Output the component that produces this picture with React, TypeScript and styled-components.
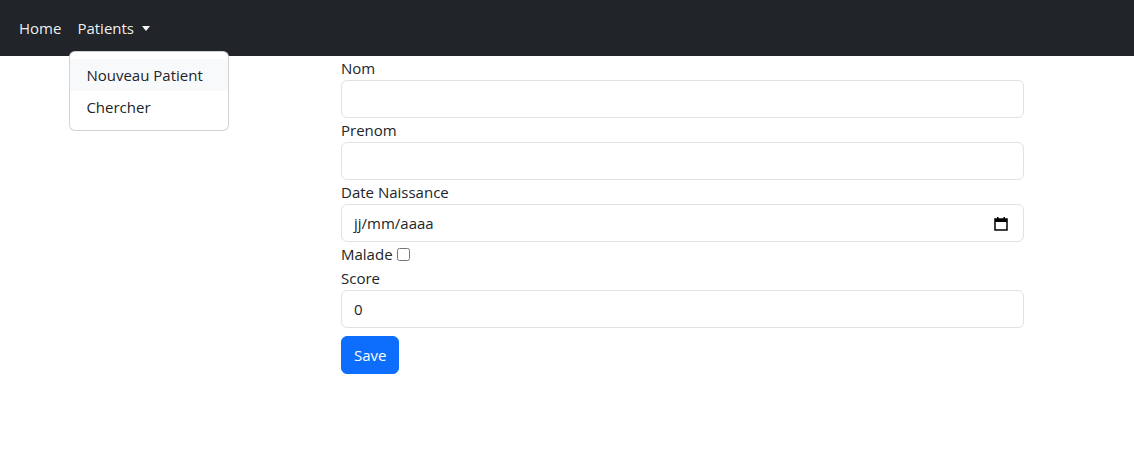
import React from "react";
import styled, {createGlobalStyle} from "styled-components";

const GlobalStyle = createGlobalStyle`
  body {
    margin: 0;
    font-family: "Open Sans", "Liberation Sans", sans-serif;
    font-size: 15px;
    line-height: 24px;
    color: #212529;
    background: #fff;
  }
  * { box-sizing: border-box; }
`

const NavBar = styled.nav`
  height: 56px;
  background: #212529;
  display: flex;
  align-items: center;
  padding: 8px 11px;
`

const NavItem = styled.div`
  position: relative;
`

const NavLink = styled.a<{ $toggle?: boolean }>`
  display: flex;
  align-items: center;
  padding: 8px 8px;
  color: rgba(255, 255, 255, 0.95);
  text-decoration: none;
  cursor: pointer;

  ${p => p.$toggle && `
    &::after {
      content: "";
      display: inline-block;
      margin-left: 8px;
      margin-top: 1px;
      border-top: 5px solid;
      border-left: 4.5px solid transparent;
      border-right: 4.5px solid transparent;
    }
  `}
`

const DropMenu = styled.ul`
  position: absolute;
  top: 43px;
  left: 0;
  width: 160px;
  margin: 0;
  padding: 7px 0;
  list-style: none;
  background: #fff;
  border: 1px solid rgba(0, 0, 0, 0.175);
  border-radius: 6px;
  z-index: 10;
`

const DropItem = styled.li<{ $active?: boolean }>`
  padding: 4px 16px;
  color: #212529;
  white-space: nowrap;
  background: ${p => (p.$active ? "#f8f9fa" : "transparent")};
`

const Form = styled.form`
  width: 683px;
  margin-left: 341px;
  display: flex;
  flex-direction: column;
`

const Label = styled.label`
  display: block;
  line-height: 24px;
`

const Input = styled.input`
  display: block;
  width: 100%;
  height: 38px;
  padding: 6px 12px;
  font: inherit;
  color: #212529;
  border: 1px solid #dee2e6;
  border-radius: 6px;
  outline: none;
`

const DateBox = styled.div`
  display: flex;
  align-items: center;
  justify-content: space-between;
  height: 38px;
  padding: 6px 15px 6px 12px;
  border: 1px solid #dee2e6;
  border-radius: 6px;
`

const CheckRow = styled.div`
  display: flex;
  align-items: center;
  height: 24px;
`

const CheckBox = styled.input`
  width: 13px;
  height: 13px;
  margin: 0 0 0 4px;
`

const SaveButton = styled.button`
  align-self: flex-start;
  margin-top: 8px;
  height: 38px;
  padding: 6px 12px;
  font: inherit;
  color: #fff;
  background: #0d6efd;
  border: 1px solid #0d6efd;
  border-radius: 6px;
  cursor: pointer;
`

const CalendarIcon = () => (
    <svg width="14" height="15" viewBox="0 0 14 15">
        <rect x="1" y="3" width="12" height="11" fill="none" stroke="#000" strokeWidth="1.5"/>
        <rect x="1" y="3" width="12" height="3" fill="#000"/>
        <rect x="3" y="1" width="1.5" height="3" fill="#000"/>
        <rect x="9.5" y="1" width="1.5" height="3" fill="#000"/>
    </svg>
)

export default function App() {
    return (
        <>
            <GlobalStyle/>
            <NavBar>
                <NavItem>
                    <NavLink>Home</NavLink>
                </NavItem>
                <NavItem>
                    <NavLink $toggle>Patients</NavLink>
                    <DropMenu>
                        <DropItem $active>Nouveau Patient</DropItem>
                        <DropItem>Chercher</DropItem>
                    </DropMenu>
                </NavItem>
            </NavBar>
            <Form onSubmit={e => e.preventDefault()}>
                <Label>Nom</Label>
                <Input type="text"/>
                <Label>Prenom</Label>
                <Input type="text"/>
                <Label>Date Naissance</Label>
                <DateBox>
                    <span>jj/mm/aaaa</span>
                    <CalendarIcon/>
                </DateBox>
                <CheckRow>
                    <span>Malade</span>
                    <CheckBox type="checkbox"/>
                </CheckRow>
                <Label>Score</Label>
                <Input type="number" defaultValue={0}/>
                <SaveButton type="submit">Save</SaveButton>
            </Form>
        </>
    )
}
